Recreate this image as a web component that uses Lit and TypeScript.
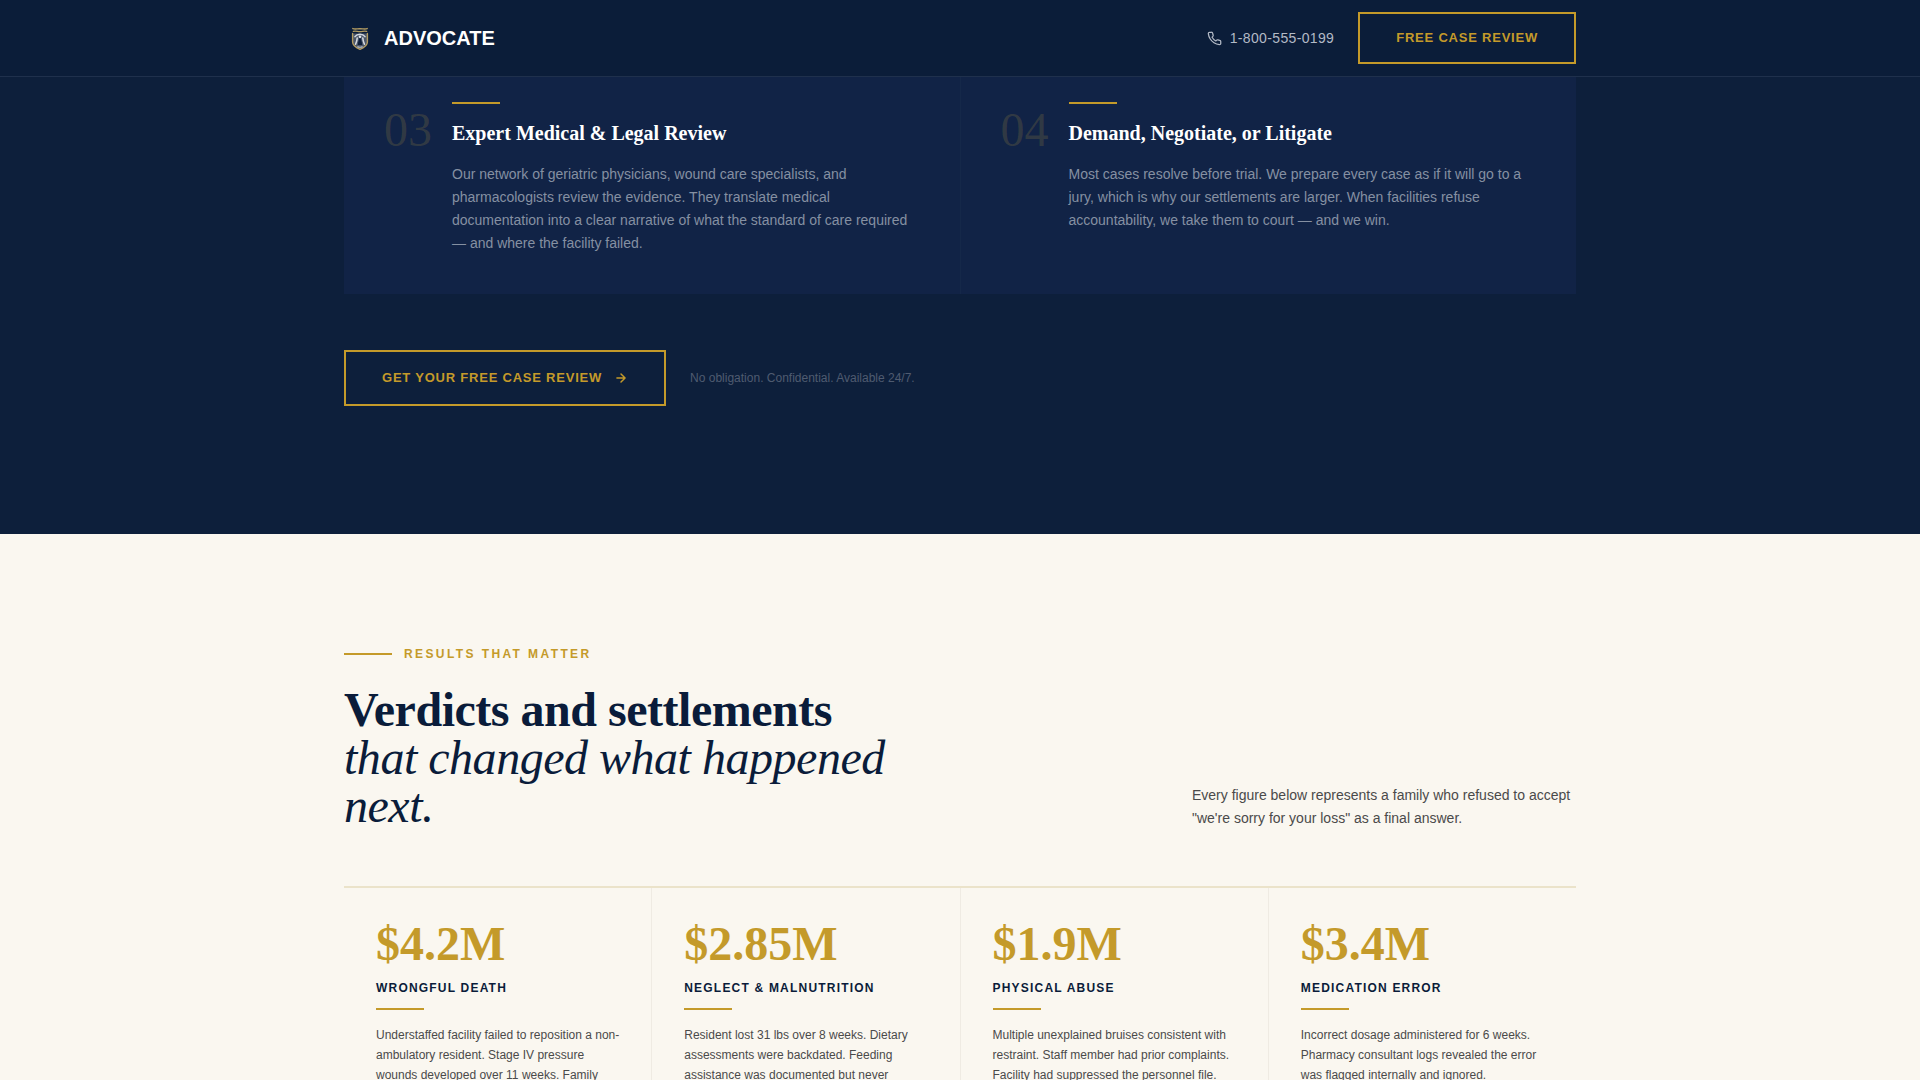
import { LitElement, html, css, svg } from "lit";
import { customElement } from "lit/decorators.js";

interface Step {
  number: string;
  title: string;
  body: string;
}

interface Result {
  amount: string;
  label: string;
  body: string;
}

const STEPS: Step[] = [
  {
    number: "03",
    title: "Expert Medical & Legal Review",
    body: "Our network of geriatric physicians, wound care specialists, and pharmacologists review the evidence. They translate medical documentation into a clear narrative of what the standard of care required — and where the facility failed.",
  },
  {
    number: "04",
    title: "Demand, Negotiate, or Litigate",
    body: "Most cases resolve before trial. We prepare every case as if it will go to a jury, which is why our settlements are larger. When facilities refuse accountability, we take them to court — and we win.",
  },
];

const RESULTS: Result[] = [
  {
    amount: "$4.2M",
    label: "Wrongful Death",
    body: "Understaffed facility failed to reposition a non-ambulatory resident. Stage IV pressure wounds developed over 11 weeks. Family",
  },
  {
    amount: "$2.85M",
    label: "Neglect & Malnutrition",
    body: "Resident lost 31 lbs over 8 weeks. Dietary assessments were backdated. Feeding assistance was documented but never",
  },
  {
    amount: "$1.9M",
    label: "Physical Abuse",
    body: "Multiple unexplained bruises consistent with restraint. Staff member had prior complaints. Facility had suppressed the personnel file.",
  },
  {
    amount: "$3.4M",
    label: "Medication Error",
    body: "Incorrect dosage administered for 6 weeks. Pharmacy consultant logs revealed the error was flagged internally and ignored.",
  },
];

const crest = svg`
  <path
    d="M9 11.500h14v8.500c0 3.500-3 5.500-7 7.500-4-2-7-4-7-7.500z"
    fill="#4a5568"
  />
  <g fill="none" stroke="#b39c62" stroke-width="1.400" stroke-linecap="round" stroke-linejoin="round">
    <path d="M8.800 6.600c2 .9 4.200.1 7.200.1s5.200.8 7.200-.1" />
    <path d="M9.400 9.400c2-.7 4 .2 6.600.2s4.600-.9 6.600-.2" />
    <path d="M8.600 11.500v8.500c0 3.700 3.200 5.600 7.400 7.400 4.200-1.800 7.400-3.700 7.400-7.400v-8.500" />
  </g>
  <g fill="none" stroke="#d3d8e0" stroke-width="1.600" stroke-linecap="round">
    <path d="M11 14.600c1.400-2 3-2.400 5-2.400s3.600.4 5 2.400" />
    <path d="M13.200 16c-.2 2.600-.8 4.600-1.600 6.200M18.800 16c.2 2.600.8 4.600 1.600 6.200" />
  </g>
  <path d="M16 15.500c-1.200 1.400-1.800 4-2.200 7.500h4.400c-.4-3.500-1-6.100-2.200-7.500z" fill="#0b1d39" />
  <circle cx="16" cy="14.800" r="1.300" fill="#e4e8ee" />
  <path d="M13.400 24.600c1.600.8 3.600.8 5.200 0" fill="none" stroke="#b9bfc9" stroke-width="1.200" />`;

@customElement("app-root")
export class AppRoot extends LitElement {
  static styles = css`
    :host {
      --navy: #0a1c3a;
      --navy-header: #0b1d39;
      --navy-section: #0d1f3b;
      --navy-card: #112346;
      --gold: #c49a2a;
      --cream: #faf7f0;
      --sans: "Liberation Sans", Arial, sans-serif;
      --serif: "Liberation Serif", "Times New Roman", serif;
      display: block;
      font-family: var(--sans);
      background: var(--cream);
    }

    * {
      box-sizing: border-box;
    }

    h2,
    h3,
    p {
      margin: 0;
    }

    .container {
      max-width: 1280px;
      margin: 0 auto;
      padding: 0 24px;
    }

    .header {
      position: sticky;
      top: 0;
      z-index: 1;
      background: var(--navy-header);
      border-bottom: 1px solid #1f304c;
    }

    .header-row {
      display: flex;
      align-items: center;
      justify-content: space-between;
      padding-top: 12px;
      padding-bottom: 12px;
    }

    .brand {
      display: flex;
      align-items: center;
      gap: 8px;
      color: #fff;
      font-size: 20px;
      line-height: 32px;
      font-weight: 700;
      text-decoration: none;
    }

    .crest {
      width: 32px;
      height: 32px;
    }

    .actions {
      display: flex;
      align-items: center;
      gap: 24px;
    }

    .phone {
      display: flex;
      align-items: center;
      gap: 8px;
      color: #b3bac6;
      font-size: 14px;
      line-height: 20px;
      letter-spacing: 0.025em;
      text-decoration: none;
    }

    .icon {
      fill: none;
      stroke: currentColor;
      stroke-width: 2;
      stroke-linecap: round;
      stroke-linejoin: round;
    }

    .phone .icon {
      width: 15px;
      height: 15px;
    }

    .cta .icon {
      width: 14px;
      height: 14px;
      stroke-width: 2.5;
    }

    .cta {
      display: inline-flex;
      align-items: center;
      gap: 12px;
      padding: 16px 36px;
      border: 2px solid var(--gold);
      background: transparent;
      color: var(--gold);
      font-family: var(--sans);
      font-size: 13px;
      line-height: 16px;
      font-weight: 700;
      letter-spacing: 0.06em;
      text-transform: uppercase;
      cursor: pointer;
    }

    .cta.large {
      padding: 18px 36px;
    }

    .process {
      background: var(--navy-section);
      padding-bottom: 128px;
    }

    .steps {
      display: grid;
      grid-template-columns: repeat(2, 1fr);
      gap: 1px;
      background: #152849;
    }

    .step {
      display: flex;
      align-items: flex-start;
      gap: 20px;
      padding: 25px 40px 39px;
      background: var(--navy-card);
    }

    .step-number {
      padding-top: 4px;
      font-family: var(--serif);
      font-size: 48px;
      line-height: 48px;
      color: rgba(184, 154, 60, 0.2);
    }

    .rule {
      width: 48px;
      height: 2px;
      background: var(--gold);
    }

    .step-title {
      margin: 16px 0 17px;
      font-family: var(--serif);
      font-size: 20px;
      line-height: 26px;
      font-weight: 700;
      color: #fff;
    }

    .step-body {
      font-size: 14px;
      line-height: 23px;
      color: #8590a2;
    }

    .cta-row {
      display: flex;
      align-items: center;
      gap: 24px;
      margin-top: 56px;
    }

    .note {
      font-size: 12px;
      line-height: 16px;
      color: #4f5b70;
    }

    .results {
      padding: 112px 0;
      background: var(--cream);
    }

    .eyebrow {
      display: flex;
      align-items: center;
      gap: 12px;
      margin-bottom: 24px;
      font-size: 12px;
      line-height: 16px;
      font-weight: 700;
      letter-spacing: 0.2em;
      text-transform: uppercase;
      color: var(--gold);
    }

    .results-head {
      display: flex;
      align-items: flex-end;
      justify-content: space-between;
      gap: 32px;
      margin-bottom: 56px;
    }

    .results-title {
      max-width: 600px;
      font-family: var(--serif);
      font-size: 48px;
      line-height: 48px;
      font-weight: 700;
      letter-spacing: -0.01em;
      color: var(--navy);
    }

    .results-title em {
      display: block;
      font-weight: 400;
    }

    .results-intro {
      flex: 0 1 384px;
      font-size: 14px;
      line-height: 23px;
      color: #4a4a4a;
    }

    .results-grid {
      display: grid;
      grid-template-columns: repeat(4, 1fr);
      gap: 1px;
      border-top: 2px solid #ebe3ca;
      background: #efebe3;
    }

    .result {
      padding: 32px;
      background: var(--cream);
    }

    .amount {
      font-family: var(--serif);
      font-size: 48px;
      line-height: 48px;
      font-weight: 700;
      color: var(--gold);
    }

    .result-label {
      margin: 12px 0;
      font-size: 12px;
      line-height: 16px;
      font-weight: 700;
      letter-spacing: 0.1em;
      text-transform: uppercase;
      color: var(--navy);
    }

    .result-body {
      margin-top: 15px;
      font-size: 12px;
      line-height: 20px;
      color: #4a4a4a;
    }
  `;

  private renderStep(step: Step) {
    return html`
      <article class="step">
        <span class="step-number">${step.number}</span>
        <div>
          <div class="rule"></div>
          <h3 class="step-title">${step.title}</h3>
          <p class="step-body">${step.body}</p>
        </div>
      </article>
    `;
  }

  private renderResult(result: Result) {
    return html`
      <article class="result">
        <p class="amount">${result.amount}</p>
        <h3 class="result-label">${result.label}</h3>
        <div class="rule"></div>
        <p class="result-body">${result.body}</p>
      </article>
    `;
  }

  render() {
    return html`
      <header class="header">
        <div class="container header-row">
          <a class="brand" href="#">
            <svg class="crest" viewBox="0 0 32 32" aria-hidden="true">${crest}</svg>
            <span>ADVOCATE</span>
          </a>
          <div class="actions">
            <a class="phone" href="tel:18005550199">
              <svg class="icon" viewBox="0 0 24 24" aria-hidden="true">
                <path
                  d="M22 16.920v3a2 2 0 0 1-2.180 2 19.790 19.790 0 0 1-8.630-3.070 19.500 19.500 0 0 1-6-6 19.790 19.790 0 0 1-3.070-8.670A2 2 0 0 1 4.110 2h3a2 2 0 0 1 2 1.720 12.840 12.840 0 0 0 .7 2.810 2 2 0 0 1-.45 2.110L8.090 9.910a16 16 0 0 0 6 6l1.270-1.270a2 2 0 0 1 2.110-.45 12.840 12.840 0 0 0 2.810.7A2 2 0 0 1 22 16.920z"
                />
              </svg>
              <span>1-800-555-0199</span>
            </a>
            <button class="cta" type="button">Free Case Review</button>
          </div>
        </div>
      </header>
      <main>
        <section class="process">
          <div class="container">
            <div class="steps">${STEPS.map((step) => this.renderStep(step))}</div>
            <div class="cta-row">
              <button class="cta large" type="button">
                <span>Get Your Free Case Review</span>
                <svg class="icon" viewBox="0 0 24 24" aria-hidden="true">
                  <path d="M5 12h14M12 5l7 7-7 7" />
                </svg>
              </button>
              <p class="note">No obligation. Confidential. Available 24/7.</p>
            </div>
          </div>
        </section>
        <section class="results">
          <div class="container">
            <div class="eyebrow">
              <span class="rule"></span>
              <span>Results That Matter</span>
            </div>
            <div class="results-head">
              <h2 class="results-title">
                Verdicts and settlements <em>that changed what happened next.</em>
              </h2>
              <p class="results-intro">
                Every figure below represents a family who refused to accept "we're sorry for your
                loss" as a final answer.
              </p>
            </div>
            <div class="results-grid">${RESULTS.map((result) => this.renderResult(result))}</div>
          </div>
        </section>
      </main>
    `;
  }
}
